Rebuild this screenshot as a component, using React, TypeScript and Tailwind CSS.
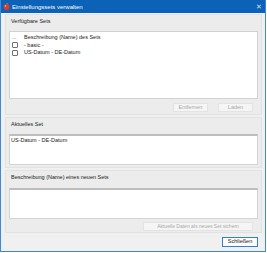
export default function App() {
  const font = { fontFamily: '"Liberation Sans", Arial, sans-serif' };

  return (
    <div className="w-[267px] h-[253px] bg-white" style={font}>
      <div className="w-[266px] h-[252px] flex flex-col bg-[#f0f0f0] border border-t-0 border-[#3c8ad8]">
        {/* Title bar */}
        <div className="h-[13px] shrink-0 bg-[#0c62b6] flex items-center pl-[2px] pr-[3px]">
          <svg width="7" height="7" viewBox="0 0 7 7" className="shrink-0">
            <circle cx="3.5" cy="4" r="3" fill="#e03a2c" />
            <path d="M3.5 1 L5 0" stroke="#5cb82e" strokeWidth="1" />
            <circle cx="2.5" cy="3" r="0.8" fill="#f7b6a8" />
          </svg>
          <span className="ml-[2px] text-[6px] leading-none text-white">Einstellungssets verwalten</span>
          <span className="ml-auto text-[7px] leading-none text-[#cfe0f3]">✕</span>
        </div>

        {/* Body */}
        <div className="flex-1 flex flex-col pl-[4px] pr-[3px] pt-[1px]">
          {/* Verfügbare Sets */}
          <div className="h-[101px] bg-[#ececec] border border-[#e2e2e2] px-[3px] pt-[2px] flex flex-col">
            <div className="h-[9px] text-[5.5px] leading-[9px] text-[#1a1a1a] pl-[2px]">Verfügbare Sets</div>
            <div className="mt-[5px] h-[68px] bg-white border border-[#d2d2d2] pt-[2px] pl-[2px]">
              <div className="flex items-center h-[7px] text-[5.5px] text-[#1a1a1a]">
                <span className="w-[12px] text-[#555]">...</span>
                <span>Beschreibung (Name) des Sets</span>
              </div>
              {["- basic -", "US-Datum - DE-Datum"].map((s) => (
                <div key={s} className="flex items-center h-[7px] mt-[0.5px] text-[5.5px] text-[#1a1a1a]">
                  <span className="w-[12px] flex">
                    <span className="w-[6px] h-[6px] border border-[#707070] bg-white rounded-[1px]" />
                  </span>
                  <span>{s}</span>
                </div>
              ))}
            </div>
            <div className="mt-[4px] flex justify-end gap-[10px] pr-[5px]">
              <button className="w-[35px] h-[9px] bg-[#f5f5f5] border border-[#e3e3e3] text-[5.5px] leading-none text-[#a8a8a8]">
                Entfernen
              </button>
              <button className="w-[35px] h-[9px] bg-[#f5f5f5] border border-[#e3e3e3] text-[5.5px] leading-none text-[#a8a8a8]">
                Laden
              </button>
            </div>
          </div>

          {/* Aktuelles Set */}
          <div className="mt-[2px] h-[51px] bg-[#ececec] border border-[#e2e2e2] px-[3px] pt-[2px] flex flex-col">
            <div className="h-[9px] text-[5.5px] leading-[9px] text-[#1a1a1a] pl-[2px]">Aktuelles Set</div>
            <div className="mt-[5px] h-[31px] bg-white border border-[#d4d4d4] border-t-2 border-t-[#bdbdbd] pl-[1px] pt-[1px] text-[5.5px] leading-[7px] text-[#1a1a1a]">
              US-Datum - DE-Datum
            </div>
          </div>

          {/* Neues Set */}
          <div className="mt-[2px] h-[63px] bg-[#ececec] border border-[#e2e2e2] px-[3px] pt-[2px] flex flex-col">
            <div className="h-[9px] text-[5.5px] leading-[9px] text-[#1a1a1a] pl-[2px]">
              Beschreibung (Name) eines neuen Sets
            </div>
            <div className="mt-[6px] h-[31px] bg-white border border-[#d4d4d4] border-t-2 border-t-[#bdbdbd]" />
            <div className="mt-[3px] flex justify-end pr-[5px]">
              <button className="w-[110px] h-[9px] bg-[#f5f5f5] border border-[#e3e3e3] text-[5px] leading-none text-[#a8a8a8] whitespace-nowrap">
                Aktuelle Daten als neues Set sichern
              </button>
            </div>
          </div>

          {/* Footer */}
          <div className="mt-[4px] flex justify-end pr-[4px]">
            <button className="w-[36px] h-[10px] bg-[#fdfdfd] border border-[#2f7fd4] text-[5.5px] leading-none text-[#1a1a1a]">
              Schließen
            </button>
          </div>
        </div>
      </div>
    </div>
  );
}
